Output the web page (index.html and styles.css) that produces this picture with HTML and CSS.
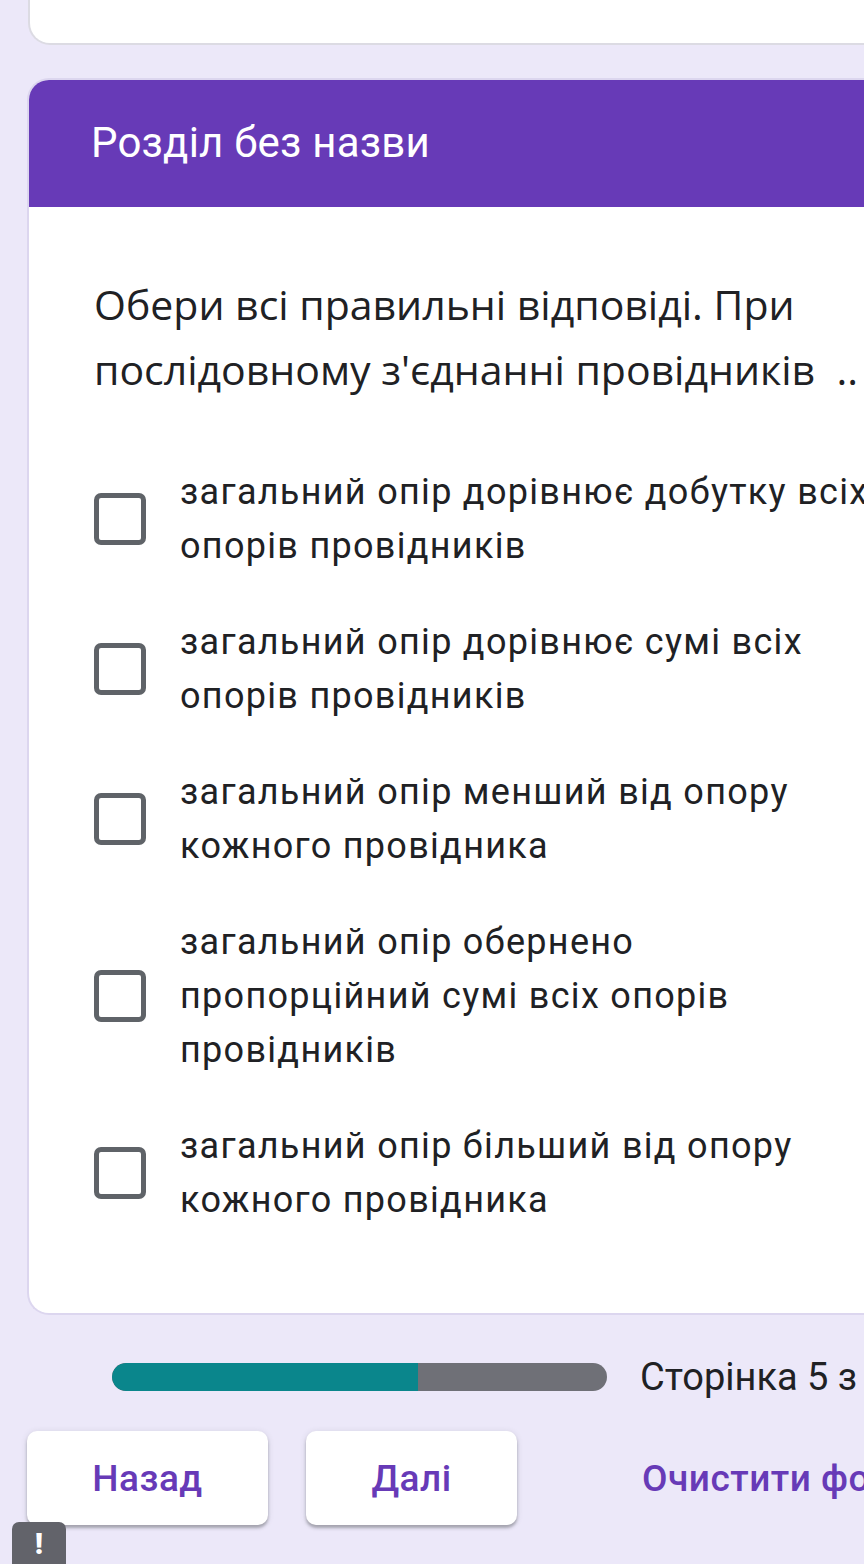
FILE: index.html
```html
<!DOCTYPE html>
<html lang="uk">
<head>
<meta charset="utf-8">
<title>Форма</title>
<link rel="stylesheet" href="styles.css">
</head>
<body>
<div class="page">
  <div class="top-card"></div>

  <section class="section-card">
    <header class="section-header">Розділ без назви</header>
    <div class="section-body">
      <p class="question">Обери всі правильні відповіді. При<br>послідовному з'єднанні провідників &nbsp;..</p>
      <ul class="options">
        <li class="option"><span class="box"></span><span class="label">загальний опір дорівнює добутку всіх<br>опорів провідників</span></li>
        <li class="option"><span class="box"></span><span class="label">загальний опір дорівнює сумі всіх<br>опорів провідників</span></li>
        <li class="option"><span class="box"></span><span class="label">загальний опір менший від опору<br>кожного провідника</span></li>
        <li class="option"><span class="box"></span><span class="label">загальний опір обернено<br>пропорційний сумі всіх опорів<br>провідників</span></li>
        <li class="option"><span class="box"></span><span class="label">загальний опір більший від опору<br>кожного провідника</span></li>
      </ul>
    </div>
  </section>

  <div class="progress-row">
    <div class="progress"><div class="progress-fill" style="width:306px"></div></div>
    <span class="progress-text">Сторінка 5 з 9</span>
  </div>

  <div class="buttons">
    <button class="btn btn-back">Назад</button>
    <button class="btn btn-next">Далі</button>
    <button class="btn-text">Очистити форму</button>
  </div>

  <div class="report">!</div>
</div>
</body>
</html>
```

FILE: styles.css
```css
* { box-sizing: border-box; }

html, body {
  margin: 0;
  padding: 0;
  background: #ece8f9;
}

body {
  font-family: Roboto, "Noto Sans", "DejaVu Sans", sans-serif;
  color: #202124;
  overflow: hidden;
}

.page {
  position: relative;
  width: 864px;
  height: 1564px;
  overflow: hidden;
}

.top-card {
  margin-left: 28px;
  width: 900px;
  height: 45px;
  background: #ffffff;
  border: 2px solid #dcdbe3;
  border-top: none;
  border-bottom-left-radius: 22px;
}

.section-card {
  margin-top: 33px;
  margin-left: 27px;
  width: 900px;
  background: #ffffff;
  border-radius: 22px 0 0 22px;
  border: 2px solid #dcd6ef;
  border-right: none;
  overflow: hidden;
}

.section-header {
  height: 128px;
  background: #673ab7;
  color: #ffffff;
  font-size: 42px;
  line-height: 128px;
  letter-spacing: 0.2px;
  padding-left: 62px;
  margin-top: -1px;
}

.section-body {
  padding: 65px 0 86px 65px;
}

.question {
  margin: 0;
  font-family: "Open Sans", Roboto, sans-serif;
  font-size: 41px;
  line-height: 65px;
  letter-spacing: 0;
  white-space: nowrap;
}

.options {
  list-style: none;
  margin: 63px 0 0;
  padding: 0;
  display: flex;
  flex-direction: column;
  gap: 42px;
}

.option {
  display: flex;
  align-items: center;
  gap: 34px;
}

.box {
  flex: none;
  width: 52px;
  height: 52px;
  border: 5px solid #5f6368;
  border-radius: 7px;
}

.label {
  font-size: 36px;
  line-height: 54px;
  letter-spacing: 1.3px;
  white-space: nowrap;
}

.progress-row {
  display: flex;
  align-items: center;
  margin-top: 40px;
  padding-left: 112px;
  gap: 33px;
}

.progress {
  flex: none;
  width: 495px;
  height: 28px;
  border-radius: 14px;
  background: #6f7077;
  overflow: hidden;
}

.progress-fill {
  height: 100%;
  background: #0a868c;
  border-radius: 14px 0 0 14px;
}

.progress-text {
  font-size: 38px;
  line-height: 44px;
  white-space: nowrap;
  color: #202124;
}

.buttons {
  display: flex;
  align-items: center;
  margin-top: 32px;
  padding-left: 27px;
  gap: 38px;
}

.btn {
  flex: none;
  height: 94px;
  border: none;
  background: #ffffff;
  border-radius: 10px;
  box-shadow: 0 3px 3px rgba(60, 64, 67, 0.35), 0 1px 6px rgba(60, 64, 67, 0.15);
  color: #673ab7;
  font-family: Roboto, "Noto Sans", sans-serif;
  font-size: 37px;
  font-weight: 500;
  letter-spacing: 0.5px;
  padding: 0;
}

.btn-back { width: 241px; }
.btn-next { width: 211px; }

.btn-text {
  flex: none;
  border: none;
  background: transparent;
  color: #673ab7;
  font-family: Roboto, "Noto Sans", sans-serif;
  font-size: 37px;
  font-weight: 500;
  letter-spacing: 0.5px;
  white-space: nowrap;
  padding: 0 0 0 87px;
  height: 94px;
}

.report {
  position: absolute;
  left: 12px;
  bottom: -4px;
  width: 54px;
  height: 46px;
  background: #62636a;
  border-radius: 7px 7px 0 0;
  color: #ffffff;
  font-size: 30px;
  font-weight: 900;
  text-align: center;
  line-height: 44px;
}
```
